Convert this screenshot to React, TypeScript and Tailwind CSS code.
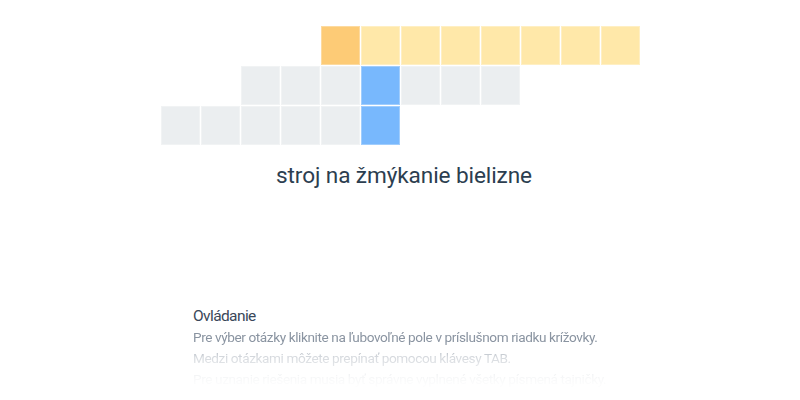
const ROWS: { start: number; cells: string[] }[] = [
  { start: 4, cells: ['o', 'y', 'y', 'y', 'y', 'y', 'y', 'y'] },
  { start: 2, cells: ['g', 'g', 'g', 'b', 'g', 'g', 'g'] },
  { start: 0, cells: ['g', 'g', 'g', 'g', 'g', 'b'] },
]

const CELL_CLASS: Record<string, string> = {
  o: 'bg-[#fdcb76]',
  y: 'bg-[#ffe8a9]',
  g: 'bg-[#ebeef0]',
  b: 'bg-[#78b8fd]',
}

function Cell({ kind }: { kind: string }) {
  return <div className={`h-[39px] w-[39px] border border-white/30 ${CELL_CLASS[kind]}`} />
}

export default function App() {
  return (
    <div className="h-[400px] w-full overflow-hidden bg-white font-['Roboto',sans-serif]">
      {/* crossword */}
      <div className="flex justify-center pt-[26px]">
        <div className="flex flex-col gap-px">
          {ROWS.map((row, i) => (
            <div key={i} className="flex gap-px">
              {Array.from({ length: row.start }).map((_, j) => (
                <div key={'e' + j} className="h-[39px] w-[39px]" />
              ))}
              {row.cells.map((c, j) => (
                <Cell key={j} kind={c} />
              ))}
            </div>
          ))}
        </div>
      </div>

      {/* active clue */}
      <div className="mt-[15px] pl-[8px] text-center text-[22.6px] leading-[32px] tracking-[-0.1px] text-[#2c3e50]">
        stroj na žmýkanie bielizne
      </div>

      {/* controls help */}
      <div className="mx-auto mt-[113px] w-[414px]">
        <h3 className="text-[15.5px] leading-[22px] tracking-[-0.6px] text-[#3a4759]">Ovládanie</h3>
        <div className="text-[13.6px] leading-[21px] tracking-[-0.4px] text-[#8a94a1] [mask-image:linear-gradient(to_bottom,black_0px,black_16px,rgba(0,0,0,0.35)_30px,rgba(0,0,0,0.06)_52px,transparent_63px)]">
          <p className="whitespace-nowrap">Pre výber otázky kliknite na ľubovoľné pole v príslušnom riadku krížovky.</p>
          <p className="whitespace-nowrap">Medzi otázkami môžete prepínať pomocou klávesy TAB.</p>
          <p className="whitespace-nowrap">Pre uznanie riešenia musia byť správne vyplnené všetky písmená tajničky.</p>
        </div>
      </div>
    </div>
  )
}
